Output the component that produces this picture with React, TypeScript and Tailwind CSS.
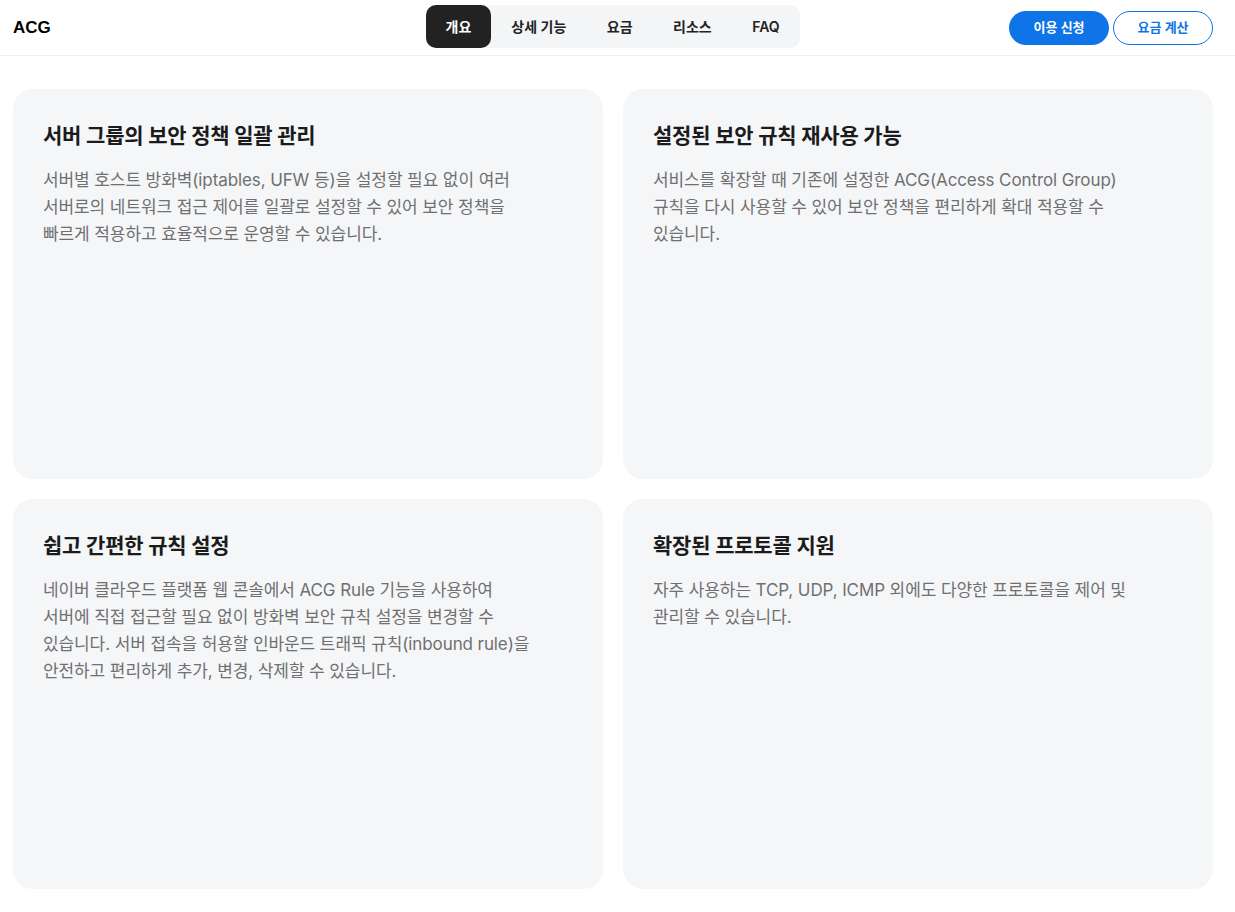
import React from "react";

const font = { fontFamily: "Inter, 'Noto Sans CJK KR', 'Noto Sans', sans-serif" };

const cards: { title: string; lines: string[] }[] = [
  {
    title: "서버 그룹의 보안 정책 일괄 관리",
    lines: [
      "서버별 호스트 방화벽(iptables, UFW 등)을 설정할 필요 없이 여러",
      "서버로의 네트워크 접근 제어를 일괄로 설정할 수 있어 보안 정책을",
      "빠르게 적용하고 효율적으로 운영할 수 있습니다.",
    ],
  },
  {
    title: "설정된 보안 규칙 재사용 가능",
    lines: [
      "서비스를 확장할 때 기존에 설정한 ACG(Access Control Group)",
      "규칙을 다시 사용할 수 있어 보안 정책을 편리하게 확대 적용할 수",
      "있습니다.",
    ],
  },
  {
    title: "쉽고 간편한 규칙 설정",
    lines: [
      "네이버 클라우드 플랫폼 웹 콘솔에서 ACG Rule 기능을 사용하여",
      "서버에 직접 접근할 필요 없이 방화벽 보안 규칙 설정을 변경할 수",
      "있습니다. 서버 접속을 허용할 인바운드 트래픽 규칙(inbound rule)을",
      "안전하고 편리하게 추가, 변경, 삭제할 수 있습니다.",
    ],
  },
  {
    title: "확장된 프로토콜 지원",
    lines: [
      "자주 사용하는 TCP, UDP, ICMP 외에도 다양한 프로토콜을 제어 및",
      "관리할 수 있습니다.",
    ],
  },
];

const tabs = ["개요", "상세 기능", "요금", "리소스", "FAQ"];

export default function App() {
  return (
    <div className="min-h-screen bg-white" style={font}>
      <header className="h-[56px] border-b border-[#efefef] flex items-center px-[13px] relative">
        <div
          className="text-[17px] font-bold text-black"
          style={{ fontFamily: "'Liberation Sans', Arial, sans-serif" }}
        >
          ACG
        </div>
        <nav className="absolute left-[426px] top-[5px] h-[43px] flex items-center bg-[#f4f5f7] rounded-[10px]">
          {tabs.map((t, i) => (
            <div
              key={t}
              className={
                i === 0
                  ? "h-[43px] w-[65px] flex items-center justify-center rounded-[10px] bg-[#222222] text-white text-[14px] font-semibold"
                  : "h-[43px] flex items-center justify-center text-[14px] font-semibold text-[#222222] px-[20.25px]"
              }
            >
              {t}
            </div>
          ))}
        </nav>
        <div className="ml-auto flex items-center gap-[4px] mr-[9px]">
          <button className="h-[34px] w-[100px] rounded-full bg-[#0e74e8] text-white text-[13px] font-semibold">
            이용 신청
          </button>
          <button className="h-[34px] w-[100px] rounded-full border border-[#0e74e8] bg-white text-[#0e74e8] text-[13px] font-semibold">
            요금 계산
          </button>
        </div>
      </header>
      <main className="grid grid-cols-2 gap-[20px] px-[13px] pt-[33px] pr-[22px]">
        {cards.map((c) => (
          <section key={c.title} className="h-[390px] rounded-[20px] bg-[#f5f6f8] px-[30px] pt-[32px]">
            <h2 className="text-[21px] font-bold text-[#1b1b1b] leading-[30px] tracking-[-0.2px]">{c.title}</h2>
            <p className="mt-[16px] text-[17px] leading-[27px] text-[#707070] tracking-[-0.1px] whitespace-nowrap">
              {c.lines.map((l, i) => (
                <React.Fragment key={i}>
                  {l}
                  {i < c.lines.length - 1 && <br />}
                </React.Fragment>
              ))}
            </p>
          </section>
        ))}
      </main>
    </div>
  );
}
